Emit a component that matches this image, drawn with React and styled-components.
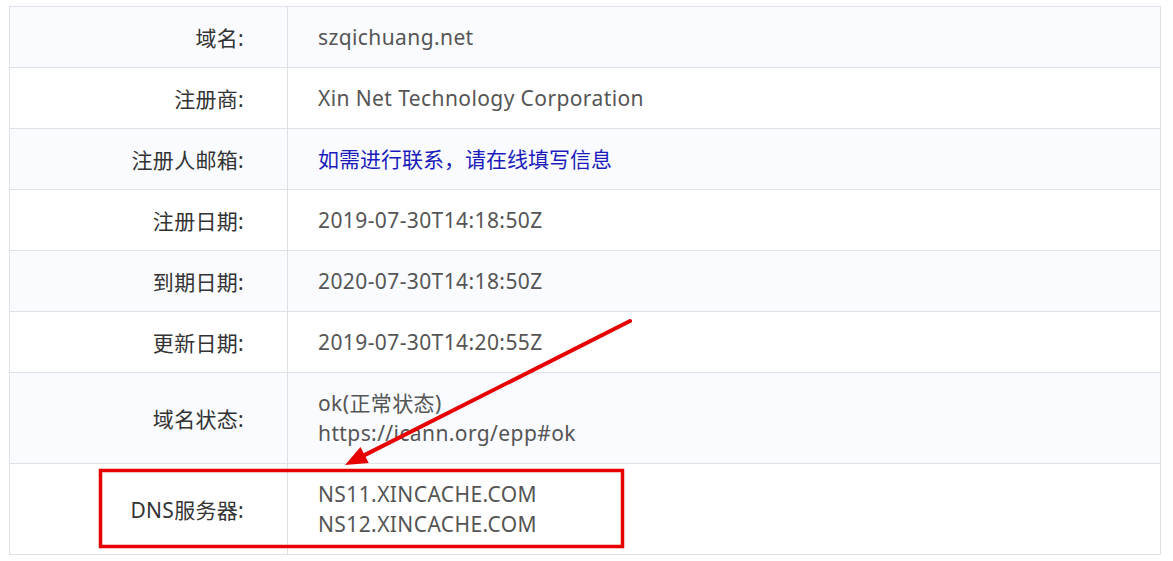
import styled, { createGlobalStyle } from 'styled-components';

const GlobalStyle = createGlobalStyle`
	html, body {
		margin: 0;
		padding: 0;
		background: #fff;
	}
	body {
		font-family: "Noto Sans", "Noto Sans CJK SC", sans-serif;
	}
`;

const rows = [
	{ label: '域名', value: ['szqichuang.net'] },
	{ label: '注册商', value: ['Xin Net Technology Corporation'] },
	{ label: '注册人邮箱', value: ['如需进行联系，请在线填写信息'], link: true },
	{ label: '注册日期', value: ['2019-07-30T14:18:50Z'] },
	{ label: '到期日期', value: ['2020-07-30T14:18:50Z'] },
	{ label: '更新日期', value: ['2019-07-30T14:20:55Z'] },
	{ label: '域名状态', value: ['ok(正常状态)', 'https://icann.org/epp#ok'] },
	{ label: 'DNS服务器', value: ['NS11.XINCACHE.COM', 'NS12.XINCACHE.COM'] },
];

function App() {
	return (
		<Page>
			<GlobalStyle />
			<Table>
				<tbody>
					{rows.map((row, i) => (
						<Row key={row.label} $shaded={i % 2 === 0} $tall={row.value.length > 1}>
							<Label>{row.label}:</Label>
							<Value $link={row.link}>
								{row.value.map((line) => (
									<Line key={line}>{line}</Line>
								))}
							</Value>
						</Row>
					))}
				</tbody>
			</Table>
			{/* 빨간 표시 */}
			<Marks width="1173" height="561" viewBox="0 0 1173 561">
				<rect x="100.5" y="470.5" width="522" height="76" fill="none" stroke="#e60000" strokeWidth="3.5" />
				<line x1="630" y1="321" x2="364" y2="455.4" stroke="#e60000" strokeWidth="4" strokeLinecap="round" />
				<polygon points="345,465 368.7,463.1 360.5,447.1" fill="#e60000" />
			</Marks>
		</Page>
	);
}

const Page = styled.div`
	position: relative;
	width: 1173px;
	height: 561px;
	padding: 6px 0 0 9px;
	box-sizing: border-box;
`;

const Table = styled.table`
	width: 1152px;
	border-collapse: collapse;
	table-layout: fixed;
	border: 1px solid #dde2e8;
	font-size: 21px;
`;

const Row = styled.tr`
	height: ${(p) => (p.$tall ? '91px' : '61px')};
	background: ${(p) => (p.$shaded ? '#f9fbfe' : '#fff')};

	td {
		border: 1px solid #dde2e8;
		box-sizing: border-box;
	}
`;

const Label = styled.td`
	width: 278px;
	text-align: right;
	padding: 0 43px 0 0;
	color: #333;
	letter-spacing: 0.3px;
`;

const Value = styled.td`
	padding: 0 0 0 30px;
	color: ${(p) => (p.$link ? '#1b1bbb' : '#555')};
	letter-spacing: ${(p) => (p.$link ? '0' : '0.4px')};
	line-height: 30px;
`;

const Line = styled.div``;

const Marks = styled.svg`
	position: absolute;
	top: 0;
	left: 0;
	pointer-events: none;
`;

export default App;
